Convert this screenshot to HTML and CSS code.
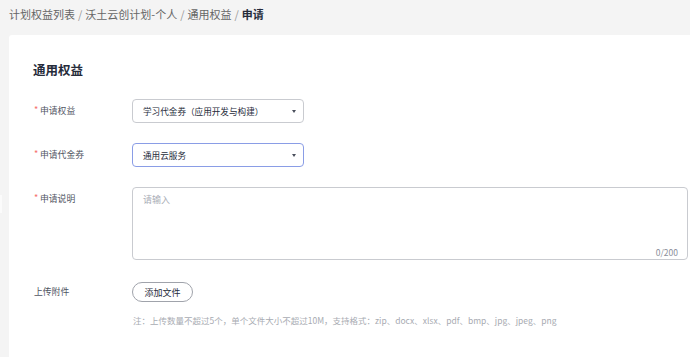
FILE: index.html
```html
<!DOCTYPE html>
<html lang="zh-CN">
<head>
    <meta charset="UTF-8">
    <title>申请 | 通用权益</title>
    <link rel="stylesheet" href="styles.css">
</head>
<body>
    <div class="side-handle"></div>

    <div class="breadcrumb">
        <span class="crumb">计划权益列表</span>
        <span class="sep">/</span>
        <span class="crumb">沃土云创计划-个人</span>
        <span class="sep">/</span>
        <span class="crumb">通用权益</span>
        <span class="sep">/</span>
        <span class="crumb current">申请</span>
    </div>

    <div class="card">
        <h2 class="card-title">通用权益</h2>

        <div class="form-row">
            <label class="form-label required">申请权益</label>
            <div class="select">
                <span class="select-value">学习代金券（应用开发与构建）</span>
                <span class="select-arrow"></span>
            </div>
        </div>

        <div class="form-row">
            <label class="form-label required">申请代金券</label>
            <div class="select active">
                <span class="select-value">通用云服务</span>
                <span class="select-arrow"></span>
            </div>
        </div>

        <div class="form-row top">
            <label class="form-label required">申请说明</label>
            <div class="textarea-wrap">
                <textarea class="textarea" placeholder="请输入"></textarea>
                <span class="counter">0/200</span>
            </div>
        </div>

        <div class="form-row upload-row">
            <label class="form-label">上传附件</label>
            <button class="btn-upload">添加文件</button>
        </div>
        <p class="upload-tip">注：上传数量不超过5个，单个文件大小不超过10M，支持格式：zip、docx、xlsx、pdf、bmp、jpg、jpeg、png</p>
    </div>
</body>
</html>
```

FILE: styles.css
```css
* {
    margin: 0;
    padding: 0;
    box-sizing: border-box;
    font-family: 'Noto Sans CJK SC', 'Noto Sans', sans-serif;
}

body {
    background: #f4f4f4;
    height: 100vh;
    overflow: hidden;
    position: relative;
}

.side-handle {
    position: absolute;
    left: 0;
    top: 195px;
    width: 2px;
    height: 18px;
    background: #fbfbfb;
}

.breadcrumb {
    height: 35px;
    padding: 5px 0 0 9px;
    font-size: 11px;
    line-height: 18px;
    color: #666;
    display: flex;
    gap: 3px;
}

.sep {
    color: #999;
}

.current {
    color: #252b3a;
    font-weight: 600;
}

.card {
    margin-left: 9px;
    background: #fff;
    border-radius: 3px 0 0 0;
    height: calc(100vh - 35px);
    padding: 26px 0 0 24px;
}

.card-title {
    font-size: 12.5px;
    line-height: 18px;
    font-weight: 700;
    color: #252b3a;
    margin-bottom: 20px;
}

.form-row {
    display: flex;
    align-items: center;
    margin-bottom: 20px;
}

.form-row.top {
    align-items: flex-start;
}

.form-label {
    width: 99px;
    flex-shrink: 0;
    font-size: 8.8px;
    line-height: 24px;
    color: #4f5462;
    padding-left: 1px;
    position: relative;
}

.required {
    padding-left: 7px;
}

.required::before {
    content: '*';
    position: absolute;
    left: 1px;
    top: -1px;
    color: #f66f6a;
    font-size: 9px;
}

.select {
    width: 172px;
    height: 24px;
    border: 1px solid #c9cbd0;
    border-radius: 4px;
    display: flex;
    align-items: center;
    justify-content: space-between;
    padding: 0 7px 0 10px;
    font-size: 8.6px;
    color: #252b3a;
}

.select.active {
    border-color: #8a9de6;
}

.select-arrow {
    width: 0;
    height: 0;
    border-left: 2.5px solid transparent;
    border-right: 2.5px solid transparent;
    border-top: 3px solid #4a4f5c;
}

.textarea-wrap {
    position: relative;
    width: 556px;
    height: 73px;
}

.textarea {
    width: 100%;
    height: 100%;
    border: 1px solid #c9cbd0;
    border-radius: 4px;
    padding: 5px 10px;
    font-size: 9px;
    line-height: 14px;
    color: #252b3a;
    resize: none;
    outline: none;
}

.textarea::placeholder {
    color: #aaaeb7;
}

.counter {
    position: absolute;
    right: 10px;
    bottom: 3px;
    font-size: 8.5px;
    line-height: 10px;
    color: #8a8e99;
}

.upload-row {
    margin-bottom: 10px;
}

.btn-upload {
    width: 61px;
    height: 20px;
    border: 1px solid #a0a3ab;
    border-radius: 10px;
    background: #fff;
    font-size: 9px;
    color: #252b3a;
}

.upload-tip {
    margin-left: 100px;
    font-size: 8.5px;
    line-height: 12px;
    color: #a8abb2;
}
```
